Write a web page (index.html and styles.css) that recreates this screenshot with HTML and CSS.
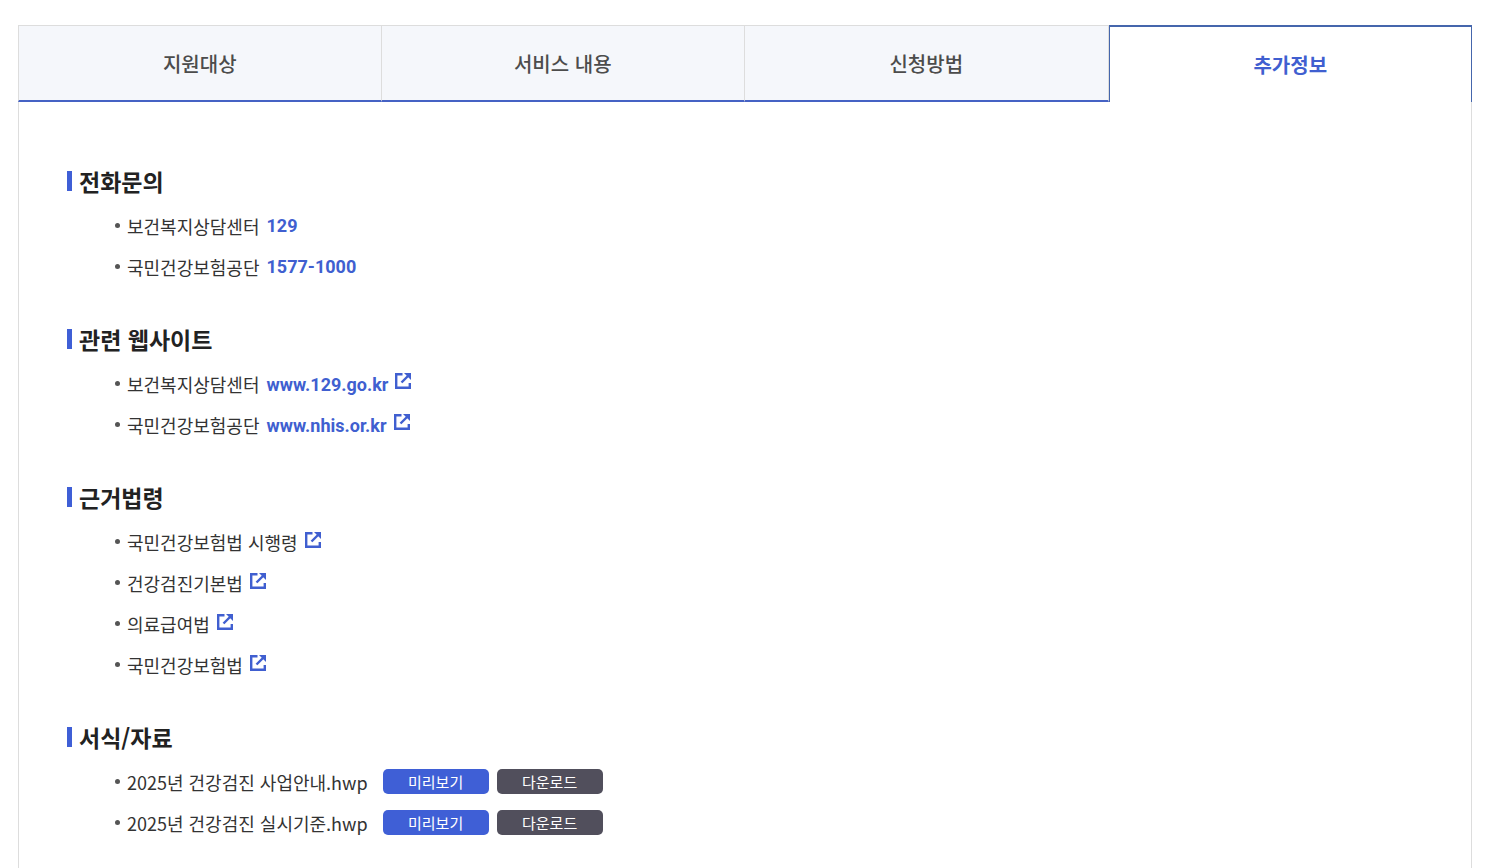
FILE: index.html
```html
<!DOCTYPE html>
<html lang="ko">
<head>
  <meta charset="UTF-8">
  <meta name="viewport" content="width=device-width, initial-scale=1.0">
  <title>추가정보</title>
  <link rel="stylesheet" href="styles.css">
</head>
<body>
  <!-- 새창 아이콘 -->
  <svg class="sprite" aria-hidden="true">
    <symbol id="icon-new" viewBox="0 0 16 16">
      <path d="M7.500 1.200H1.200V14.800H14.800V10" fill="none" stroke="currentColor" stroke-width="2.400"/>
      <path d="M6.500 9.500L13 3" fill="none" stroke="currentColor" stroke-width="2.400"/>
      <path d="M9 0H16V7Z" fill="currentColor"/>
    </symbol>
  </svg>

  <!-- 탭 메뉴 -->
  <div class="tabs" role="tablist">
    <button type="button" class="tab" role="tab" aria-selected="false">지원대상</button>
    <button type="button" class="tab" role="tab" aria-selected="false">서비스 내용</button>
    <button type="button" class="tab" role="tab" aria-selected="false">신청방법</button>
    <button type="button" class="tab active" role="tab" id="tab-info" aria-selected="true">추가정보</button>
  </div>

  <!-- 추가정보 -->
  <main class="panel" role="tabpanel" aria-labelledby="tab-info">
    <section class="info">
      <h2>전화문의</h2>
      <ul>
        <li>보건복지상담센터 <a class="point" href="tel:129">129</a></li>
        <li>국민건강보험공단 <a class="point" href="tel:1577-1000">1577-1000</a></li>
      </ul>
    </section>

    <section class="info">
      <h2>관련 웹사이트</h2>
      <ul>
        <li>보건복지상담센터 <a class="point" href="#">www.129.go.kr<svg class="icon" aria-hidden="true"><use href="#icon-new"/></svg></a></li>
        <li>국민건강보험공단 <a class="point" href="#">www.nhis.or.kr<svg class="icon" aria-hidden="true"><use href="#icon-new"/></svg></a></li>
      </ul>
    </section>

    <section class="info">
      <h2>근거법령</h2>
      <ul>
        <li><a href="#">국민건강보험법 시행령<svg class="icon" aria-hidden="true"><use href="#icon-new"/></svg></a></li>
        <li><a href="#">건강검진기본법<svg class="icon" aria-hidden="true"><use href="#icon-new"/></svg></a></li>
        <li><a href="#">의료급여법<svg class="icon" aria-hidden="true"><use href="#icon-new"/></svg></a></li>
        <li><a href="#">국민건강보험법<svg class="icon" aria-hidden="true"><use href="#icon-new"/></svg></a></li>
      </ul>
    </section>

    <section class="info">
      <h2>서식/자료</h2>
      <ul>
        <li>
          <span class="file">2025년 건강검진 사업안내.hwp</span>
          <button type="button" class="btn preview">미리보기</button>
          <button type="button" class="btn download">다운로드</button>
        </li>
        <li>
          <span class="file">2025년 건강검진 실시기준.hwp</span>
          <button type="button" class="btn preview">미리보기</button>
          <button type="button" class="btn download">다운로드</button>
        </li>
      </ul>
    </section>
  </main>
</body>
</html>
```
FILE: styles.css
```css
* {
  box-sizing: border-box;
}
body {
  display: flex;
  flex-direction: column;
  min-height: 100vh;
  margin: 0;
  padding: 25px 19px 0 18px;
  background: #fff;
  color: #333;
  font-family: "Noto Sans CJK KR", sans-serif;
  font-size: 18px;
}
button {
  font-family: inherit;
  cursor: pointer;
}
a {
  color: inherit;
  text-decoration: none;
}
.sprite {
  display: none;
}
.tabs {
  display: grid;
  grid-template-columns: repeat(4, 1fr);
  height: 77px;
}
.tab {
  padding: 0;
  border: 1px solid #ddd;
  border-left: 0;
  border-bottom: 2px solid #4562c4;
  background: #f5f7fb;
  color: #4c4c4c;
  font-size: 20px;
  font-weight: 500;
}
.tab:first-child {
  border-left: 1px solid #ddd;
}
.tab.active {
  border: 1px solid #4566ac;
  border-top-width: 2px;
  border-bottom: 0;
  background: #fff;
  color: #405fd0;
  font-weight: 700;
}
.panel {
  flex: 1;
  padding: 62px 48px 0;
  border: 1px solid #ddd;
  border-top: 0;
  border-bottom: 0;
}
.info {
  margin-bottom: 35px;
}
.info h2 {
  display: flex;
  align-items: center;
  gap: 7px;
  height: 34px;
  margin: 0 0 7px;
  color: #222;
  font-size: 23px;
  font-weight: 700;
  line-height: 32px;
}
.info h2::before {
  content: "";
  width: 5px;
  height: 20px;
  background: #3f5fd6;
}
.info ul {
  margin: 0;
  padding: 0 0 0 48px;
  list-style: none;
}
.info li {
  display: flex;
  align-items: center;
  height: 41px;
  white-space: pre;
}
.info li::before {
  content: "";
  width: 5px;
  height: 5px;
  margin-right: 7px;
  border-radius: 50%;
  background: #555;
}
.point {
  margin-left: 2px;
  color: #405fd0;
  font-family: Roboto, "Noto Sans CJK KR", sans-serif;
  font-weight: 700;
}
.icon {
  width: 16px;
  height: 16px;
  margin: 0 0 2px 7px;
  color: #405fd0;
}
.file {
  margin-right: 15px;
}
.btn {
  width: 106px;
  height: 25px;
  margin-right: 8px;
  padding: 0;
  border: 0;
  border-radius: 5px;
  color: #fff;
  font-size: 15px;
  line-height: 25px;
}
.preview {
  background: #3f5fd6;
}
.download {
  background: #514f5c;
}
```
